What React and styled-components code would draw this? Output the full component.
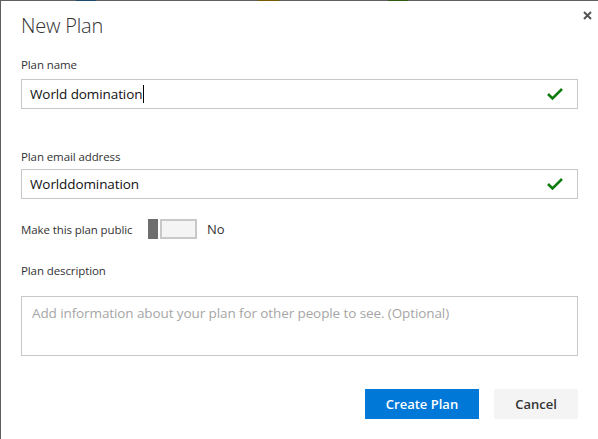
import React from "react";
import styled, { createGlobalStyle } from "styled-components";

const Global = createGlobalStyle`
  html, body { margin: 0; padding: 0; background: #fff; }
  body { font-family: "Open Sans", "Noto Sans", sans-serif; color: #333; }
  * { box-sizing: border-box; }
`;

const Frame = styled.div`
  position: relative;
  width: 598px;
  height: 439px;
  display: flex;
  flex-direction: column;
  border-left: 1px solid #5f5f5f;
  background: #fff;
  overflow: hidden;
`;

const TopEdge = styled.div`
  height: 1px;
  display: flex;
  background: #5f5f5f;
  flex-shrink: 0;
`;

const EdgeBit = styled.span`
  display: block;
  margin-left: ${(p) => p.$gap}px;
  width: ${(p) => p.$w}px;
  background: ${(p) => p.$c};
`;

const Dialog = styled.div`
  flex: 1;
  display: flex;
  flex-direction: column;
  padding: 11px 20px 0 20px;
`;

const Title = styled.h1`
  margin: 0;
  font-weight: 300;
  font-size: 20px;
  line-height: 28px;
  color: #333;
  letter-spacing: -0.2px;
`;

const CloseBtn = styled.button`
  position: absolute;
  top: 10px;
  right: 6px;
  width: 10px;
  height: 10px;
  padding: 0;
  border: 0;
  background: none;
  display: flex;
  align-items: center;
  justify-content: center;
`;

const Label = styled.div`
  font-size: 11.5px;
  line-height: 16px;
  color: #333;
  letter-spacing: -0.1px;
  margin-top: ${(p) => p.$mt}px;
  margin-bottom: ${(p) => p.$mb}px;
`;

const Field = styled.div`
  height: 30px;
  border: 1px solid #c8c8c8;
  display: flex;
  align-items: center;
  padding: 0 14px 0 8px;
`;

const Value = styled.span`
  flex: 1;
  font-size: 13.5px;
  color: #111;
  display: flex;
  align-items: center;
  letter-spacing: -0.1px;
`;

const Caret = styled.span`
  display: inline-block;
  width: 1px;
  height: 18px;
  background: #000;
  margin-left: 1px;
`;

const ToggleRow = styled.div`
  margin-top: 20px;
  height: 20px;
  display: flex;
  align-items: center;
`;

const ToggleLabel = styled.span`
  font-size: 11.5px;
  letter-spacing: -0.1px;
  color: #333;
  width: 127px;
`;

const Switch = styled.div`
  display: flex;
  height: 20px;
  gap: 2px;
`;

const Thumb = styled.span`
  width: 10px;
  height: 20px;
  background: #6e6e6e;
`;

const Track = styled.span`
  width: 37px;
  height: 20px;
  border: 2px solid #c8c8c8;
  background: #f4f4f4;
`;

const State = styled.span`
  font-size: 13px;
  color: #333;
  margin-left: 10px;
`;

const TextArea = styled.div`
  height: 60px;
  border: 1px solid #c8c8c8;
  padding: 7px 10px;
  font-size: 13.5px;
  color: #a6a6a6;
  letter-spacing: -0.1px;
`;

const Actions = styled.div`
  margin-top: 33px;
  display: flex;
  justify-content: flex-end;
  gap: 15px;
`;

const Button = styled.button`
  height: 30px;
  width: ${(p) => p.$w}px;
  border: 0;
  padding: 0;
  font-family: "Open Sans", "Noto Sans", sans-serif;
  font-size: 13px;
  font-weight: 600;
  background: ${(p) => (p.$primary ? "#0078d7" : "#f4f4f4")};
  color: ${(p) => (p.$primary ? "#fff" : "#333")};
`;

const Check = () => (
  <svg width="16" height="14" viewBox="0 0 16 14">
    <path d="M1 7 L5.5 11.5 L15 2" fill="none" stroke="#107c10" strokeWidth="2.6" />
  </svg>
);

export default function App() {
  return (
    <>
      <Global />
      <Frame>
        <TopEdge>
          <EdgeBit $gap={75} $w={20} $c="#1d4b70" />
          <EdgeBit $gap={162} $w={21} $c="#7a5a00" />
          <EdgeBit $gap={109} $w={20} $c="#2d5b13" />
        </TopEdge>
        <CloseBtn aria-label="Close">
          <svg width="9" height="9" viewBox="0 0 9 9">
            <path d="M1 1 L8 8 M8 1 L1 8" stroke="#555" strokeWidth="2" />
          </svg>
        </CloseBtn>
        <Dialog>
          <Title>New Plan</Title>
          <Label $mt={17} $mb={6}>Plan name</Label>
          <Field>
            <Value>
              World domination<Caret />
            </Value>
            <Check />
          </Field>
          <Label $mt={40} $mb={4}>Plan email address</Label>
          <Field>
            <Value>Worlddomination</Value>
            <Check />
          </Field>
          <ToggleRow>
            <ToggleLabel>Make this plan public</ToggleLabel>
            <Switch>
              <Thumb />
              <Track />
            </Switch>
            <State>No</State>
          </ToggleRow>
          <Label $mt={24} $mb={17}>Plan description</Label>
          <TextArea>Add information about your plan for other people to see. (Optional)</TextArea>
          <Actions>
            <Button $primary $w={114}>Create Plan</Button>
            <Button $w={84}>Cancel</Button>
          </Actions>
        </Dialog>
      </Frame>
    </>
  );
}
